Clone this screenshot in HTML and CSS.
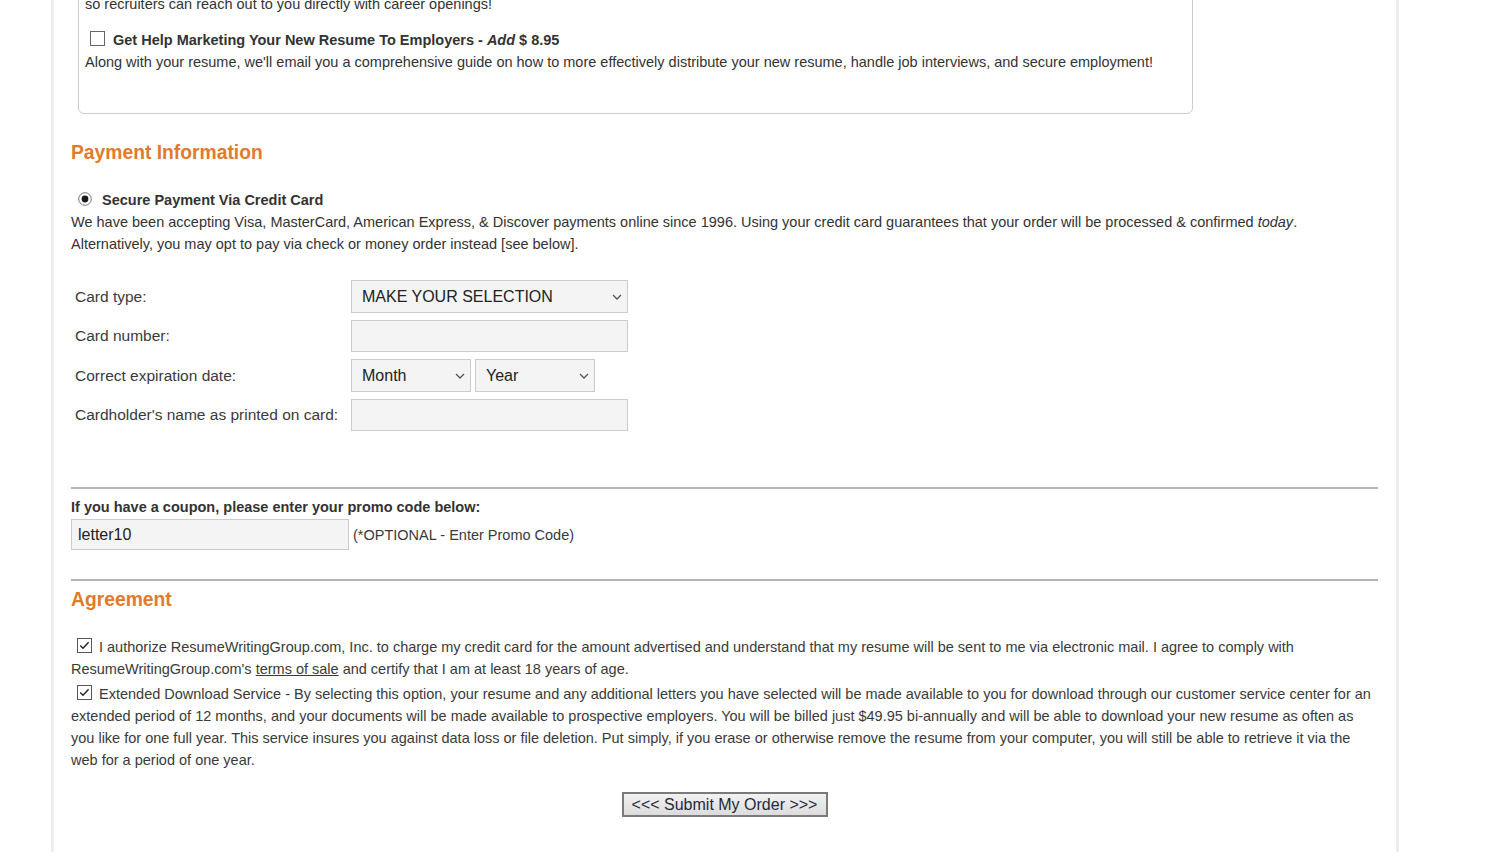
FILE: index.html
```html
<!DOCTYPE html>
<html lang="en">
<head>
<meta charset="utf-8">
<title>Order - Payment Information</title>
<link rel="stylesheet" href="styles.css">
</head>
<body>
<div class="page">
  <div class="content">
    <div class="upsell">
      <p>so recruiters can reach out to you directly with career openings!</p>
      <div class="opt-title">
        <span class="cb cb-empty"><svg width="15" height="15" viewBox="0 0 15 15"><rect x="0.5" y="0.5" width="14" height="14" fill="#fff" stroke="#666"/></svg></span>
        <b>Get Help Marketing Your New Resume To Employers - <i>Add</i> $ 8.95</b>
      </div>
      <p>Along with your resume, we'll email you a comprehensive guide on how to more effectively distribute your new resume, handle job interviews, and secure employment!</p>
    </div>

    <h2 class="section-title">Payment Information</h2>

    <div class="radio-line">
      <span class="radio"><svg width="14" height="14" viewBox="0 0 14 14"><circle cx="7" cy="7" r="6.3" fill="#fff" stroke="#777"/><circle cx="7" cy="7" r="3.4" fill="#1a1a1a"/></svg></span>
      <b>Secure Payment Via Credit Card</b>
    </div>
    <p class="desc">We have been accepting Visa, MasterCard, American Express, &amp; Discover payments online since 1996. Using your credit card guarantees that your order will be processed &amp; confirmed <i>today</i>.<br>Alternatively, you may opt to pay via check or money order instead [see below].</p>

    <div class="card-grid">
      <label class="lbl">Card type:</label>
      <span class="sel sel-wide">
        <select><option>MAKE YOUR SELECTION</option></select>
        <svg class="chev" width="10" height="6" viewBox="0 0 10 6"><polyline points="1,1 5,5 9,1" fill="none" stroke="#555" stroke-width="1.3"/></svg>
      </span>

      <label class="lbl">Card number:</label>
      <input class="txt txt-wide" type="text">

      <label class="lbl">Correct expiration date:</label>
      <span class="exp">
        <span class="sel sel-small">
          <select><option>Month</option></select>
          <svg class="chev" width="10" height="6" viewBox="0 0 10 6"><polyline points="1,1 5,5 9,1" fill="none" stroke="#555" stroke-width="1.3"/></svg>
        </span>
        <span class="sel sel-small">
          <select><option>Year</option></select>
          <svg class="chev" width="10" height="6" viewBox="0 0 10 6"><polyline points="1,1 5,5 9,1" fill="none" stroke="#555" stroke-width="1.3"/></svg>
        </span>
      </span>

      <label class="lbl">Cardholder's name as printed on card:</label>
      <input class="txt txt-wide" type="text">
    </div>

    <div class="rule rule-1"></div>

    <div class="coupon-label"><b>If you have a coupon, please enter your promo code below:</b></div>
    <div class="coupon-row">
      <input class="txt txt-coupon" type="text" value="letter10">
      <span class="hint">(*OPTIONAL - Enter Promo Code)</span>
    </div>

    <div class="rule rule-2"></div>

    <h2 class="section-title agree-title">Agreement</h2>

    <p class="agree agree-1"><span class="cb cb-check"><svg width="15" height="15" viewBox="0 0 15 15"><rect x="0.5" y="0.5" width="14" height="14" fill="#fff" stroke="#555"/><polyline points="3.2,7.4 6,10.2 11.6,4.2" fill="none" stroke="#222" stroke-width="1.4"/></svg></span>I authorize ResumeWritingGroup.com, Inc. to charge my credit card for the amount advertised and understand that my resume will be sent to me via electronic mail. I agree to comply with ResumeWritingGroup.com's <a href="#" class="link">terms of sale</a> and certify that I am at least 18 years of age.</p>
    <p class="agree agree-2"><span class="cb cb-check"><svg width="15" height="15" viewBox="0 0 15 15"><rect x="0.5" y="0.5" width="14" height="14" fill="#fff" stroke="#555"/><polyline points="3.2,7.4 6,10.2 11.6,4.2" fill="none" stroke="#222" stroke-width="1.4"/></svg></span>Extended Download Service - By selecting this option, your resume and any additional letters you have selected will be made available to you for download through our customer service center for an extended period of 12 months, and your documents will be made available to prospective employers. You will be billed just $49.95 bi-annually and will be able to download your new resume as often as you like for one full year. This service insures you against data loss or file deletion. Put simply, if you erase or otherwise remove the resume from your computer, you will still be able to retrieve it via the web for a period of one year.</p>

    <div class="submit-row">
      <button class="submit" type="button">&lt;&lt;&lt; Submit My Order &gt;&gt;&gt;</button>
    </div>
  </div>
</div>
</body>
</html>
```

FILE: styles.css
```css
html, body {
  margin: 0;
  padding: 0;
  background: #ffffff;
}

body {
  font-family: "Liberation Sans", Arial, sans-serif;
  font-size: 14.5px;
  color: #333333;
  overflow: hidden;
}

.page {
  margin-left: 51px;
  width: 1348px;
  min-height: 868px;
  box-sizing: border-box;
  border-left: 3px solid #eeeeee;
  border-right: 3px solid #eeeeee;
}

.content {
  padding: 0 18px 0 17px;
}

/* Upsell option box (scrolled partly out of view) */
.upsell {
  margin: -16px 0 0 7px;
  width: 1115px;
  box-sizing: border-box;
  border: 1px solid #cccccc;
  border-radius: 6px;
  padding: 8px 6px 40px 6px;
}

.upsell p {
  margin: 0;
  line-height: 22px;
}

.opt-title {
  margin-top: 14px;
  display: flex;
  align-items: center;
  line-height: 22px;
  color: #333;
}

.cb {
  display: inline-block;
  width: 15px;
  height: 15px;
  line-height: 0;
}

.cb-empty {
  margin-left: 5px;
  margin-right: 8px;
  position: relative;
  top: -2px;
}

.section-title {
  margin: 27px 0 0 0;
  font-size: 19.3px;
  line-height: 24px;
  font-weight: bold;
  color: #e27a2c;
}

.radio-line {
  margin-top: 24px;
  line-height: 22px;
  display: flex;
  align-items: center;
}

.radio {
  display: inline-block;
  width: 14px;
  height: 14px;
  line-height: 0;
  margin-left: 7px;
  margin-right: 10px;
  position: relative;
  top: -1px;
}

.desc {
  margin: 0;
  line-height: 22px;
}

/* Card form */
.card-grid {
  margin-top: 25px;
  display: grid;
  grid-template-columns: 280px auto;
  grid-auto-rows: auto;
  row-gap: 7px;
  align-items: center;
  justify-items: start;
}

.lbl {
  padding-left: 4px;
  font-size: 15.5px;
  color: #3a3a3a;
}

.sel {
  position: relative;
  display: inline-block;
}

.sel select {
  -webkit-appearance: none;
  appearance: none;
  display: block;
  box-sizing: border-box;
  height: 33px;
  margin: 0;
  padding: 0 0 0 10px;
  border: 1px solid #cccccc;
  border-radius: 0;
  background: #f4f4f4;
  font-family: "Liberation Sans", Arial, sans-serif;
  font-size: 16px;
  color: #222222;
}

.sel-wide select {
  width: 277px;
}

.sel-small select {
  width: 120px;
}

.chev {
  position: absolute;
  right: 6px;
  top: 14px;
  pointer-events: none;
}

.exp {
  display: flex;
  gap: 4px;
}

.txt {
  box-sizing: border-box;
  margin: 0;
  border: 1px solid #cccccc;
  border-radius: 0;
  background: #f4f4f4;
  font-family: "Liberation Sans", Arial, sans-serif;
  font-size: 16px;
  color: #222222;
  padding: 0 6px;
  outline: none;
}

.txt-wide {
  width: 277px;
  height: 32px;
}

.rule {
  height: 2px;
  background: #b5b5b5;
}

.rule-1 {
  margin-top: 56px;
}

.coupon-label {
  margin-top: 7px;
  line-height: 22px;
  color: #333;
}

.coupon-row {
  margin-top: 1px;
  display: flex;
  align-items: center;
}

.txt-coupon {
  width: 278px;
  height: 31px;
}

.hint {
  margin-left: 4px;
  color: #3a3a3a;
}

.rule-2 {
  margin-top: 29px;
}

.agree-title {
  margin-top: 7px;
}

.agree {
  margin: 0;
  line-height: 22px;
  color: #3a3a3a;
}

.agree-1 {
  margin-top: 24px;
}

.agree-2 {
  margin-top: 3px;
}

.cb-check {
  margin-left: 6px;
  margin-right: 7px;
  vertical-align: -1px;
}

.link {
  color: #3a3a3a;
  text-decoration: underline;
}

.submit-row {
  margin-top: 21px;
  display: flex;
  justify-content: center;
}

.submit {
  width: 206px;
  height: 25px;
  box-sizing: border-box;
  border: 2px solid #7a7a7a;
  border-radius: 0;
  background: linear-gradient(#f2f2f2, #dcdcdc);
  font-family: "Liberation Sans", Arial, sans-serif;
  font-size: 16px;
  color: #1f2a3a;
  padding: 0;
  cursor: pointer;
}
```
